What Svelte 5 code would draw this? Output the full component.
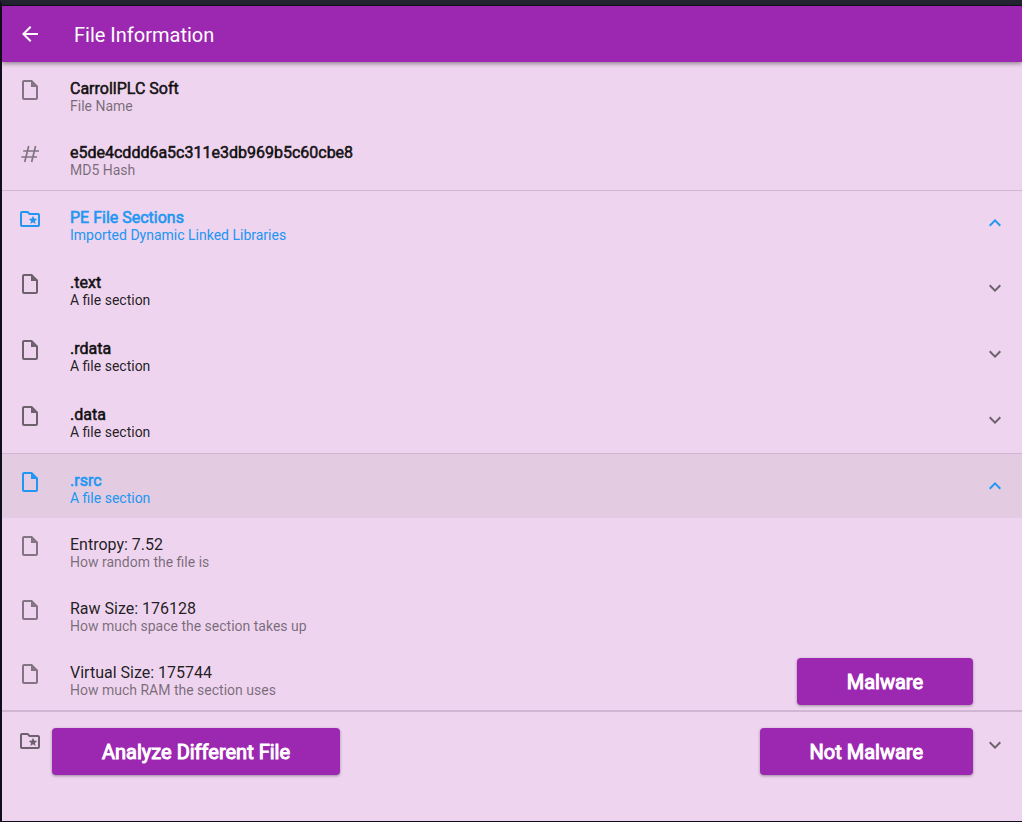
<script>
  const icons = {
    file: 'M14 2H6c-1.1 0-1.99.9-1.99 2L4 20c0 1.1.89 2 1.99 2H18c1.1 0 2-.9 2-2V8l-6-6zM6 20V4h7v5h5v11H6z',
    folder:
      'M20 6h-8l-2-2H4c-1.1 0-1.99.9-1.99 2L2 18c0 1.1.9 2 2 2h16c1.1 0 2-.9 2-2V8c0-1.1-.9-2-2-2zm0 12H4V6h5.17l2 2H20v10zM15 8.8l1.2 2.8 3 .3-2.3 2 .7 3-2.6-1.6-2.6 1.6.7-3-2.3-2 3-.3z',
    back: 'M20 11H7.83l5.59-5.59L12 4l-8 8 8 8 1.41-1.41L7.83 13H20v-2z',
    down: 'M7.41 8.59L12 13.17l4.59-4.58L18 10l-6 6-6-6 1.41-1.41z',
    up: 'M7.41 15.41L12 10.83l4.59 4.58L18 14l-6-6-6 6z'
  };

  let libraryOpen = $state(true);
  let sections = $state([
    { name: '.text', open: false, facts: [] },
    { name: '.rdata', open: false, facts: [] },
    { name: '.data', open: false, facts: [] },
    {
      name: '.rsrc',
      open: true,
      facts: [
        ['Entropy: 7.52', 'How random the file is'],
        ['Raw Size: 176128', 'How much space the section takes up'],
        ['Virtual Size: 175744', 'How much RAM the section uses']
      ]
    }
  ]);
  let lastOpen = $state(false);
</script>

{#snippet icon(name)}
  <svg class="icon" viewBox="0 0 24 24" aria-hidden="true"><path d={icons[name]} /></svg>
{/snippet}

{#snippet label(title, subtitle)}
  <span class="label">
    <span class="title">{title}</span>
    <span class="subtitle">{subtitle}</span>
  </span>
{/snippet}

<div class="window">
  <header>
    <button class="back" aria-label="Back">{@render icon('back')}</button>
    <h1>File Information</h1>
  </header>

  <main>
    <div class="row strong">
      {@render icon('file')}
      {@render label('CarrollPLC Soft', 'File Name')}
    </div>
    <div class="row strong">
      <svg class="icon hash" viewBox="0 0 24 24" aria-hidden="true">
        <path d="M10.7 4L6.7 20M17.6 4l-4 16M5.2 9H21M3.4 15H19" />
      </svg>
      {@render label('e5de4cddd6a5c311e3db969b5c60cbe8', 'MD5 Hash')}
    </div>

    <section class="tile" class:open={libraryOpen}>
      <button class="row strong" aria-expanded={libraryOpen} onclick={() => (libraryOpen = !libraryOpen)}>
        {@render icon('folder')}
        {@render label('PE File Sections', 'Imported Dynamic Linked Libraries')}
        <span class="chevron">{@render icon(libraryOpen ? 'up' : 'down')}</span>
      </button>
      {#if libraryOpen}
        {#each sections as section}
          <section class="tile" class:open={section.open}>
            <button
              class="row strong"
              class:focused={section.open}
              aria-expanded={section.open}
              onclick={() => (section.open = !section.open)}
            >
              {@render icon('file')}
              {@render label(section.name, 'A file section')}
              <span class="chevron">{@render icon(section.open ? 'up' : 'down')}</span>
            </button>
            {#if section.open}
              {#each section.facts as [title, subtitle]}
                <div class="row">
                  {@render icon('file')}
                  {@render label(title, subtitle)}
                </div>
              {/each}
            {/if}
          </section>
        {/each}
      {/if}
    </section>

    <section class="tile">
      <button class="row" aria-label="Folder" aria-expanded={lastOpen} onclick={() => (lastOpen = !lastOpen)}>
        {@render icon('folder')}
        <span class="chevron">{@render icon(lastOpen ? 'up' : 'down')}</span>
      </button>
    </section>
  </main>

  <div class="actions">
    <button class="action">Analyze Different File</button>
    <div class="verdict">
      <button class="action">Malware</button>
      <button class="action">Not Malware</button>
    </div>
  </div>
</div>

<style>
  :global(body) {
    margin: 0;
    background: #eed4ee;
  }

  .window {
    position: relative;
    box-sizing: border-box;
    display: flex;
    flex-direction: column;
    min-height: 100vh;
    border: solid #120d1c;
    border-width: 5px 0 1px 2px;
    border-top-color: #22252f;
    background: #eed4ee;
    color: rgba(0, 0, 0, 0.87);
    font-family: Roboto, 'Liberation Sans', sans-serif;
  }

  button {
    margin: 0;
    padding: 0;
    border: 0;
    background: none;
    color: inherit;
    font: inherit;
    text-align: left;
    cursor: pointer;
  }

  header {
    z-index: 1;
    display: flex;
    align-items: center;
    gap: 32px;
    height: 56px;
    padding: 0 16px;
    border-top: 1px solid #120d1c;
    background: #9c27b0;
    box-shadow: 0 2px 4px rgba(0, 0, 0, 0.35);
    color: #fff;
  }

  .back {
    display: flex;
  }

  h1 {
    margin: 0;
    padding-top: 2px;
    font-size: 20px;
    font-weight: 400;
    line-height: 24px;
  }

  .icon {
    flex: none;
    display: block;
    width: 24px;
    height: 24px;
    fill: currentColor;
  }

  .hash {
    fill: none;
    stroke: currentColor;
    stroke-width: 1.7;
  }

  .row {
    display: flex;
    align-items: flex-start;
    gap: 28px;
    box-sizing: border-box;
    width: 100%;
    height: 64px;
    padding: 16px 15px 16px 16px;
  }

  .row > .icon {
    color: rgba(0, 0, 0, 0.45);
  }

  .label {
    display: flex;
    flex-direction: column;
  }

  .title {
    font-size: 16px;
    line-height: 22px;
  }

  .strong .title {
    -webkit-text-stroke: 0.6px currentColor;
  }

  .subtitle {
    color: rgba(0, 0, 0, 0.5);
    font-size: 14px;
    line-height: 12px;
  }

  .tile {
    border: solid transparent;
    border-width: 1px 0;
  }

  .tile.open {
    border-color: #d0b6d3;
  }

  .tile > button > .icon,
  .chevron {
    color: rgba(0, 0, 0, 0.54);
  }

  .tile > button .subtitle {
    color: inherit;
  }

  .tile.open > button,
  .tile.open > button > .icon,
  .tile.open > button .chevron {
    color: #2196f3;
  }

  .chevron {
    align-self: center;
    margin-left: auto;
  }

  .focused {
    background: #e3cbe2;
  }

  .actions {
    position: absolute;
    right: 49px;
    bottom: 46px;
    left: 50px;
    display: flex;
    align-items: flex-end;
    justify-content: space-between;
    pointer-events: none;
  }

  .verdict {
    display: flex;
    flex-direction: column;
    align-items: flex-end;
    gap: 23px;
  }

  .action {
    padding: 13px 50px 11px;
    border-radius: 4px;
    background: #9c27b0;
    box-shadow: 0 1px 3px rgba(0, 0, 0, 0.35);
    color: #fff;
    font-size: 20px;
    line-height: 23px;
    -webkit-text-stroke: 1px currentColor;
    pointer-events: auto;
  }
</style>
